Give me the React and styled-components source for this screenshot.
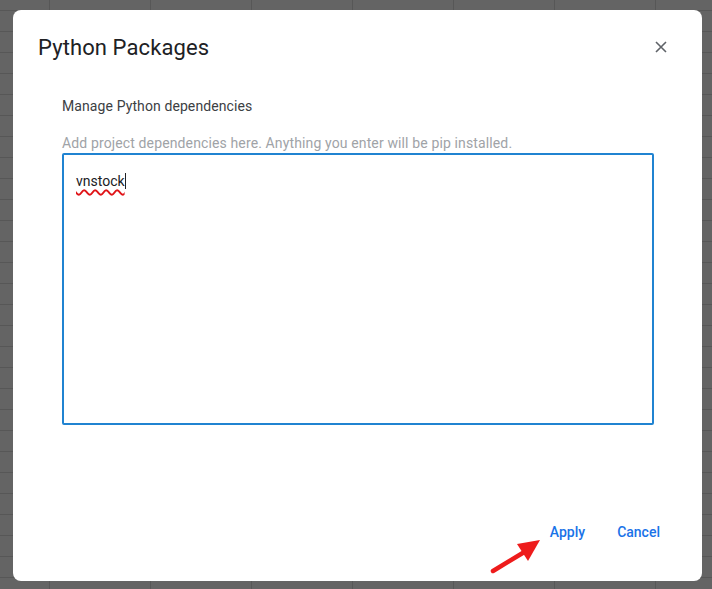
import React from "react";
import styled, { createGlobalStyle } from "styled-components";

const GlobalStyle = createGlobalStyle`
  html, body {
    margin: 0;
    padding: 0;
    height: 589px;
    overflow: hidden;
  }
  body {
    font-family: Roboto, "Liberation Sans", Arial, sans-serif;
    background-color: #646464;
    background-image:
      repeating-linear-gradient(to bottom, transparent 0 10px, #575757 10px 11px, transparent 11px 21px),
      repeating-linear-gradient(to right, transparent 0 49px, #575757 49px 50px, transparent 50px 101px);
  }
`;

const Backdrop = styled.div`
  padding: 10px 10px 8px 13px;
`;

const Dialog = styled.div`
  position: relative;
  width: 689px;
  height: 571px;
  background: #ffffff;
  border-radius: 8px;
  box-sizing: border-box;
  padding: 22px 34px 0 25px;
  display: flex;
  flex-direction: column;
`;

const Header = styled.div`
  display: flex;
  align-items: center;
  justify-content: space-between;
  height: 30px;
`;

const Title = styled.h2`
  margin: 0;
  font-size: 22px;
  font-weight: 400;
  color: #202124;
  letter-spacing: 0.1px;
`;

const Close = styled.button`
  border: none;
  background: none;
  padding: 0;
  width: 14px;
  height: 14px;
  display: flex;
  cursor: pointer;
`;

const Body = styled.div`
  padding: 34px 0 0 24px;
  display: flex;
  flex-direction: column;
`;

const Label = styled.div`
  font-size: 14px;
  color: #3c4043;
  line-height: 20px;
  letter-spacing: 0.1px;
`;

const Hint = styled.div`
  margin-top: 17px;
  font-size: 14px;
  color: #a0a3a7;
  line-height: 20px;
  letter-spacing: 0.13px;
`;

const Editor = styled.div`
  width: 592px;
  height: 272px;
  box-sizing: border-box;
  border: 2px solid #2083d1;
  border-radius: 2px;
  padding: 16px 12px;
`;

const Entry = styled.span`
  font-size: 14px;
  color: #202124;
  text-decoration: underline wavy #e01418;
  text-decoration-thickness: 2px;
  text-underline-offset: 3px;
  border-right: 1px solid #202124;
`;

const Footer = styled.div`
  margin-top: auto;
  margin-bottom: 41px;
  display: flex;
  justify-content: flex-end;
  gap: 32px;
  padding-right: 8px;
`;

const TextButton = styled.button`
  border: none;
  background: none;
  padding: 0;
  font-family: Roboto, "Liberation Sans", Arial, sans-serif;
  font-size: 14px;
  font-weight: 500;
  color: #1a73e8;
  cursor: pointer;
`;

const Arrow = styled.svg`
  position: absolute;
  left: 477px;
  top: 526px;
`;

export default function App() {
  return (
    <>
      <GlobalStyle />
      <Backdrop>
        <Dialog>
          <Header>
            <Title>Python Packages</Title>
            <Close aria-label="Close">
              <svg width="14" height="14" viewBox="0 0 14 14">
                <path d="M2 2 L12 12 M12 2 L2 12" stroke="#5f6368" strokeWidth="1.6" />
              </svg>
            </Close>
          </Header>
          <Body>
            <Label>Manage Python dependencies</Label>
            <Hint>Add project dependencies here. Anything you enter will be pip installed.</Hint>
            <Editor>
              <Entry>vnstock</Entry>
            </Editor>
          </Body>
          <Footer>
            <TextButton>Apply</TextButton>
            <TextButton>Cancel</TextButton>
          </Footer>
          <Arrow width="56" height="42" viewBox="0 0 56 42">
            <path d="M3 35 L36 15" stroke="#ee1c1c" strokeWidth="4.5" strokeLinecap="round" />
            <polygon points="50,4 27,8 38,25" fill="#ee1c1c" />
          </Arrow>
        </Dialog>
      </Backdrop>
    </>
  );
}
